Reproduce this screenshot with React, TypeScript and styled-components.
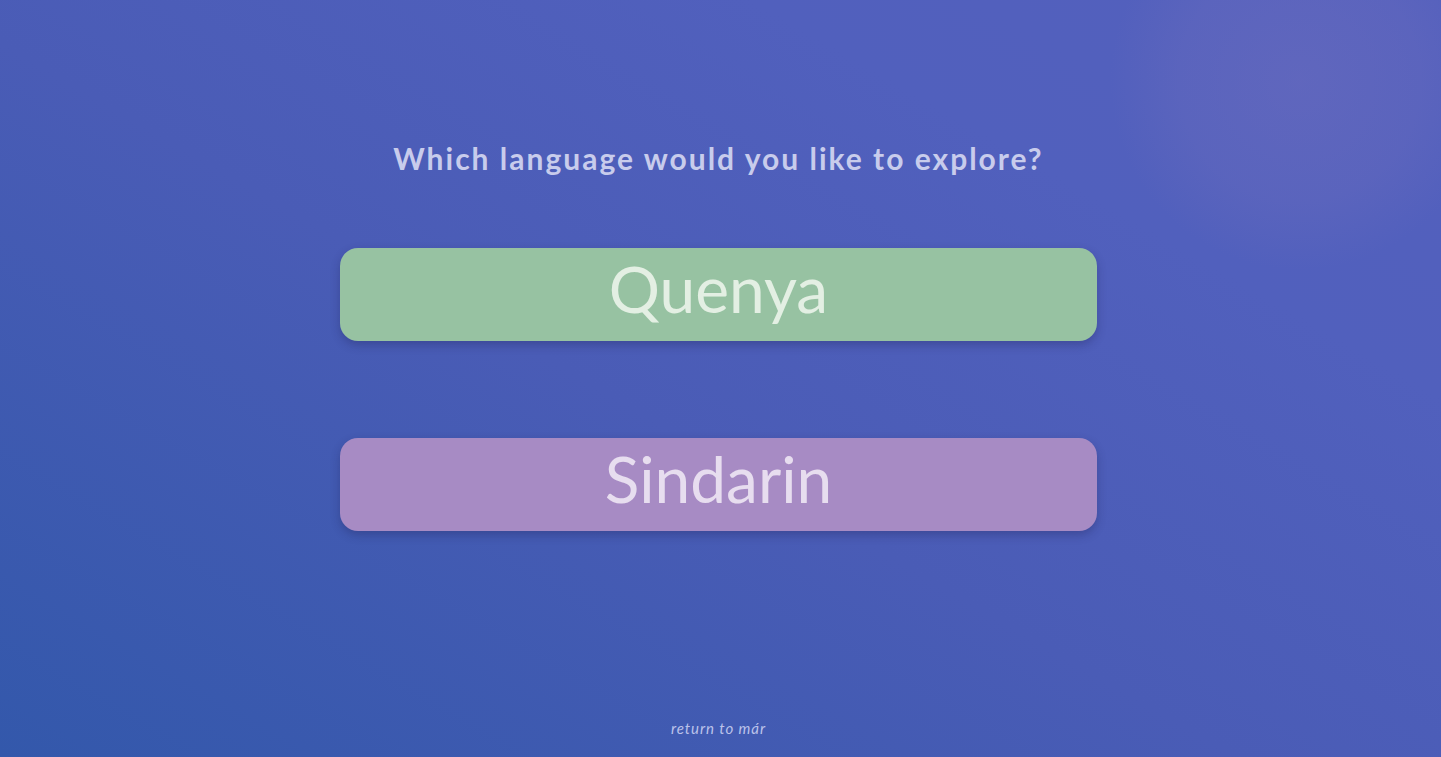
import styled, { createGlobalStyle } from 'styled-components';

const GlobalStyle = createGlobalStyle`
  html, body {
    margin: 0;
    padding: 0;
    height: 100%;
    overflow: hidden;
  }
  body {
    font-family: Lato, 'Noto Sans', sans-serif;
  }
`;

const Page = styled.div`
  position: relative;
  height: 100vh;
  display: flex;
  flex-direction: column;
  align-items: center;
  background:
    radial-gradient(circle at 1300px 80px, rgba(115, 112, 190, 0.4) 0px, rgba(115, 112, 190, 0.25) 120px, rgba(115, 112, 190, 0) 190px),
    linear-gradient(30deg, #3358ab 0%, #4a5cb6 45%, #5160bd 75%, #5460bd 100%);
  box-sizing: border-box;
  padding-top: 137px;
  padding-right: 4px;
`;

const Question = styled.h1`
  margin: 0;
  font-size: 30px;
  font-weight: 700;
  letter-spacing: 2px;
  color: #c8ccec;
  line-height: 42px;
`;

const Choices = styled.div`
  display: flex;
  flex-direction: column;
  gap: 97px;
  margin-top: 69px;
`;

const Choice = styled.button<{ $bg: string; $fg: string }>`
  box-sizing: border-box;
  width: 757px;
  height: 93px;
  border: none;
  border-radius: 18px;
  background: ${(p) => p.$bg};
  color: ${(p) => p.$fg};
  font-family: Lato, 'Noto Sans', sans-serif;
  font-size: 64px;
  font-weight: 400;
  line-height: 81px;
  padding: 0 0 12px;
  cursor: pointer;
  box-shadow: 0 4px 10px rgba(30, 30, 80, 0.3);
`;

const Footer = styled.a`
  margin-top: auto;
  margin-bottom: 20px;
  font-size: 15px;
  font-style: italic;
  letter-spacing: 0.95px;
  color: #bcc3ea;
  text-decoration: none;
`;

export default function App() {
  return (
    <>
      <GlobalStyle />
      <Page>
        <Question>Which language would you like to explore?</Question>
        <Choices>
          <Choice $bg="#97c2a2" $fg="#e3efe3">Quenya</Choice>
          <Choice $bg="#a78bc4" $fg="#e7ddef">Sindarin</Choice>
        </Choices>
        <Footer href="#">return to már</Footer>
      </Page>
    </>
  );
}
